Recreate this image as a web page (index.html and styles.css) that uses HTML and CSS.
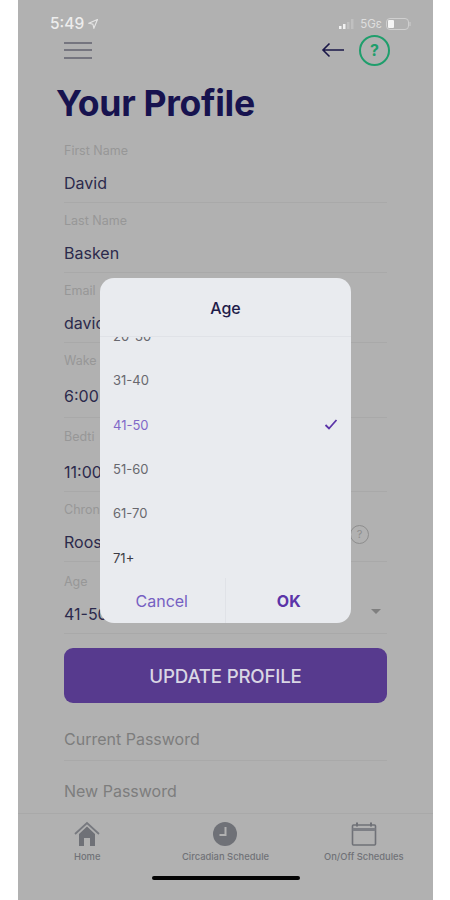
FILE: index.html
```html
<!DOCTYPE html>
<html lang="en">
  <head>
    <meta charset="UTF-8" />
    <meta name="viewport" content="width=device-width, initial-scale=1" />
    <title>Your Profile</title>
    <link rel="stylesheet" href="styles.css">
  </head>
  <body>
    <div class="phone">
      <div class="status-bar">
        <div class="status-left">
          <span class="time">5:49</span>
          <svg width="10" height="10" viewBox="0 0 9 9"><path d="M8.500 .5 .8 3.800l3.600.9.9 3.600z" fill="none" stroke="#e6e6e6" stroke-width="1"/></svg>
        </div>
        <div class="status-right">
          <svg width="17" height="10" viewBox="0 0 17 10">
            <rect x="0" y="7" width="2.500" height="3" fill="#f2f2f2"/>
            <rect x="4" y="5" width="2.500" height="5" fill="#f2f2f2"/>
            <rect x="8" y="3" width="2.500" height="7" fill="#c0c0c0"/>
            <rect x="12" y="0" width="2.500" height="10" fill="#c0c0c0"/>
          </svg>
          <span class="network">5Gε</span>
          <svg width="25" height="12" viewBox="0 0 25 12">
            <rect x=".5" y=".5" width="22" height="11" rx="3.500" fill="none" stroke="#cfcfcf"/>
            <rect x="2" y="2" width="6" height="8" rx="1" fill="#f5f5f5"/>
            <path d="M24 4v4" stroke="#cfcfcf"/>
          </svg>
        </div>
      </div>

      <header class="top-bar">
        <div class="hamburger"><div></div><div></div><div></div></div>
        <div class="top-actions">
          <svg width="24" height="16" viewBox="0 0 24 16"><path d="M23 8H2M8.500 1.500 2 8l6.500 6.500" fill="none" stroke="#1a1748" stroke-width="1.600"/></svg>
          <div class="help">?</div>
        </div>
      </header>

      <main class="content">
        <h1>Your Profile</h1>

        <div class="field">
          <label>First Name</label>
          <div class="value">David</div>
        </div>
        <div class="field">
          <label>Last Name</label>
          <div class="value">Basken</div>
        </div>
        <div class="field">
          <label>Email</label>
          <div class="value">david</div>
        </div>
        <div class="field field-tall">
          <label>Wake</label>
          <div class="value">6:00</div>
        </div>
        <div class="field field-tall">
          <label>Bedti</label>
          <div class="value">11:00</div>
        </div>
        <div class="field">
          <label>Chron</label>
          <div class="value-row">
            <div class="value">Roos</div>
            <div class="help-small">?</div>
          </div>
        </div>
        <div class="field field-age">
          <label>Age</label>
          <div class="value-row">
            <div class="value">41-50</div>
            <div class="caret"></div>
          </div>
        </div>

        <button class="update-btn">UPDATE PROFILE</button>

        <div class="password-field">Current Password</div>
        <div class="password-field">New Password</div>
      </main>

      <nav class="tab-bar">
        <div class="tab">
          <svg width="26" height="26" viewBox="0 0 26 26">
            <path d="M1 13 13 2l12 11" fill="none" stroke="#77797f" stroke-width="1.800"/>
            <path d="M5 13 13 5.500l8 7.500v12h-5v-8h-6v8H5z" fill="#6f7177"/>
          </svg>
          <span>Home</span>
        </div>
        <div class="tab">
          <svg width="26" height="26" viewBox="0 0 26 26">
            <circle cx="13" cy="13" r="12" fill="#6f7177"/>
            <path d="M13.500 6v8H7.500" fill="none" stroke="#b1b1b1" stroke-width="2"/>
          </svg>
          <span>Circadian Schedule</span>
        </div>
        <div class="tab">
          <svg width="26" height="26" viewBox="0 0 26 26">
            <rect x="1.500" y="4" width="23" height="20" rx="1" fill="none" stroke="#6f7177" stroke-width="1.600"/>
            <path d="M1.500 8.500h23" stroke="#7d7f85" stroke-width="3"/>
            <path d="M6 1.500v4M20 1.500v4" stroke="#6f7177" stroke-width="2"/>
          </svg>
          <span>On/Off Schedules</span>
        </div>
      </nav>

      <div class="home-indicator"></div>

      <div class="modal">
        <div class="modal-title">Age</div>
        <div class="modal-list">
          <div class="option">20-30</div>
          <div class="option">31-40</div>
          <div class="option selected">
            41-50
            <svg width="14" height="11" viewBox="0 0 14 11"><path d="M1.500 6 5 9.500 12.500 1" fill="none" stroke="#5b34a8" stroke-width="1.800"/></svg>
          </div>
          <div class="option">51-60</div>
          <div class="option">61-70</div>
          <div class="option option-last">71+</div>
        </div>
        <div class="modal-actions">
          <div class="modal-btn cancel">Cancel</div>
          <div class="modal-btn ok">OK</div>
        </div>
      </div>
    </div>
  </body>
</html>
```

FILE: styles.css
```css
* {
  margin: 0;
  padding: 0;
  box-sizing: border-box;
  font-family: Inter, "Liberation Sans", sans-serif;
}
body {
  background: #fff;
  color: #1f1c4a;
}

.phone {
  position: relative;
  width: 415px;
  height: 900px;
  margin-left: 18px;
  background: #b1b1b1;
  overflow: hidden;
  display: flex;
  flex-direction: column;
}

/* Status bar */
.status-bar {
  height: 35px;
  padding: 12px 22px 0 32px;
  display: flex;
  justify-content: space-between;
  align-items: center;
  color: #ededed;
}
.status-left {
  display: flex;
  align-items: center;
  gap: 4px;
}
.time {
  font-size: 15.500px;
  font-weight: 500;
}
.status-right {
  display: flex;
  align-items: center;
  gap: 4px;
}
.network {
  font-size: 11.500px;
  color: #dedede;
}

/* Header */
.top-bar {
  height: 30px;
  padding: 0 43px 0 46px;
  display: flex;
  justify-content: space-between;
  align-items: center;
}
.hamburger {
  width: 28px;
  display: flex;
  flex-direction: column;
  gap: 5.500px;
}
.hamburger div {
  height: 2px;
  background: #75757f;
}
.top-actions {
  display: flex;
  align-items: center;
  gap: 14px;
}
.help {
  width: 31px;
  height: 31px;
  border: 2px solid #1f9e6c;
  border-radius: 50%;
  color: #1f9e6c;
  font-size: 16px;
  font-weight: 700;
  display: flex;
  align-items: center;
  justify-content: center;
}

/* Form */
.content {
  flex-grow: 1;
  padding: 0 46px;
}
h1 {
  margin: 17px 0 7px -8px;
  font-size: 35.600px;
  line-height: 44px;
  font-weight: 700;
  letter-spacing: -0.3px;
  color: #17134f;
}
.field {
  height: 70px;
  padding-top: 10px;
  border-bottom: 1px solid #a9a9a9;
}
.field-tall {
  height: 74.500px;
}
.field-tall .value {
  margin-top: 17px;
}
.field-tall + .field-tall {
  padding-top: 11px;
}
.field-age {
  height: 72px;
  padding-top: 12px;
}
label {
  display: block;
  font-size: 12.500px;
  line-height: 16px;
  color: #979797;
}
.value {
  margin-top: 14px;
  font-size: 16px;
  line-height: 20px;
  color: #2c2a4c;
}
.value-row {
  display: flex;
  justify-content: space-between;
  align-items: center;
}
.help-small {
  width: 19px;
  height: 19px;
  margin: 0 18px 2px 0;
  border: 1.500px solid #8e8e8e;
  border-radius: 50%;
  color: #8e8e8e;
  font-size: 11px;
  display: flex;
  align-items: center;
  justify-content: center;
}
.caret {
  width: 0;
  height: 0;
  margin: 8px 6px 0 0;
  border-left: 5px solid transparent;
  border-right: 5px solid transparent;
  border-top: 5px solid #7f7f7f;
}
.update-btn {
  display: block;
  width: 323px;
  height: 55px;
  margin-top: 14px;
  padding-top: 2px;
  background: #573a8e;
  border: none;
  border-radius: 9px;
  color: #d9d6e4;
  font-size: 18.700px;
  font-weight: 500;
  letter-spacing: -0.2px;
}
.password-field {
  height: 58px;
  padding-top: 26px;
  border-bottom: 1px solid #a9a9a9;
  font-size: 16px;
  line-height: 20px;
  color: #7d7d7d;
}
.password-field:last-child {
  height: 50px;
  padding-top: 20px;
  border-bottom: none;
}

/* Tab bar */
.tab-bar {
  height: 61px;
  flex-shrink: 0;
  display: flex;
  padding-top: 7px;
  border-top: 1px solid #a9a9a9;
}
.tab {
  flex: 1;
  display: flex;
  flex-direction: column;
  align-items: center;
  gap: 4px;
  font-size: 9.400px;
  font-weight: 500;
  color: #707177;
}
.home-indicator {
  height: 26px;
  flex-shrink: 0;
}
.home-indicator::after {
  content: "";
  display: block;
  width: 148px;
  height: 4px;
  margin: 2px auto 0 auto;
  border-radius: 2px;
  background: #050505;
}

/* Age dialog */
.modal {
  position: absolute;
  left: 82px;
  top: 278px;
  width: 251px;
  height: 345px;
  background: #e9ebef;
  border-radius: 14px;
  display: flex;
  flex-direction: column;
  overflow: hidden;
}
.modal-title {
  height: 59px;
  flex-shrink: 0;
  padding-top: 2px;
  border-bottom: 1px solid #e0e2e7;
  display: flex;
  align-items: center;
  justify-content: center;
  font-size: 16px;
  font-weight: 500;
  color: #1f1c4a;
}
.modal-list {
  flex-grow: 1;
  overflow: hidden;
}
.option {
  height: 44.300px;
  padding: 0 13px;
  display: flex;
  justify-content: space-between;
  align-items: center;
  font-size: 13px;
  color: #68686e;
}
.option:first-child {
  margin-top: -23px;
}
.option.selected {
  color: #8068c8;
}
.option-last {
  color: #3c3c44;
}
.modal-actions {
  height: 45px;
  flex-shrink: 0;
  display: flex;
}
.modal-btn {
  width: 50%;
  display: flex;
  align-items: center;
  justify-content: center;
  font-size: 16px;
}
.cancel {
  border-right: 1px solid #e0e2e7;
  color: #7560c2;
  padding-right: 1px;
}
.ok {
  color: #5b34a8;
  font-weight: 700;
  padding-left: 1px;
}
```
